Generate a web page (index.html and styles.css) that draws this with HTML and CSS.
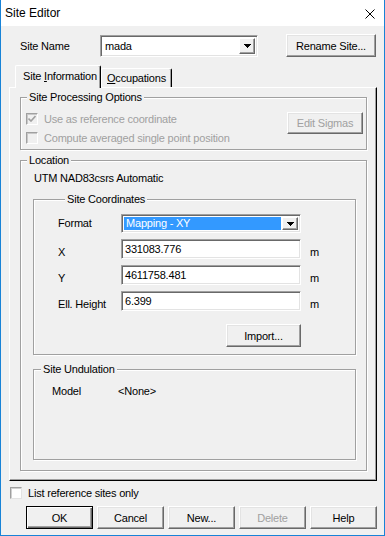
FILE: index.html
```html
<!DOCTYPE html>
<html lang="en">
<head>
  <meta charset="UTF-8">
  <title>Site Editor</title>
  <link rel="stylesheet" href="styles.css">
</head>
<body>
  <div class="window">
    <!-- Title bar -->
    <div class="titlebar">
      <span class="title">Site Editor</span>
      <svg class="close" width="10" height="10" viewBox="0 0 10 10">
        <path d="M0.5 0.5L9.5 9.5M9.5 0.5L0.5 9.5" stroke="#000" stroke-width="1" fill="none"/>
      </svg>
    </div>

    <div class="client">
      <div class="name-row">
        <span class="name-label">Site Name</span>
        <div class="combo name-combo">
          <span class="combo-text">mada</span>
          <span class="combo-btn">
            <svg width="7" height="4" viewBox="0 0 7 4"><path d="M0 0H7V1H6V2H5V3H4V4H3V3H2V2H1V1H0Z"/></svg>
          </span>
        </div>
        <button class="btn rename">Rename Site...</button>
      </div>

      <div class="tabs">
        <div class="tab tab-active"><span>Site <u>I</u>nformation</span></div>
        <div class="tab"><span><u>O</u>ccupations</span></div>
      </div>

      <div class="panel">
        <!-- Site Processing Options -->
        <div class="group processing">
          <div class="group-title">Site Processing Options</div>
          <div class="processing-body">
            <div class="checks">
              <div class="check disabled">
                <span class="box">
                  <svg width="8" height="7" viewBox="0 0 8 7"><path d="M0.5 3.5L3 6L7.5 1" stroke="#a0a0a0" stroke-width="1.6" fill="none"/></svg>
                </span>
                <span>Use as reference coordinate</span>
              </div>
              <div class="check disabled">
                <span class="box"></span>
                <span>Compute averaged single point position</span>
              </div>
            </div>
            <button class="btn sigmas" disabled>Edit Sigmas</button>
          </div>
        </div>

        <!-- Location -->
        <div class="group location">
          <div class="group-title">Location</div>
          <div class="datum">UTM NAD83csrs Automatic</div>

          <div class="group sub coords">
            <div class="group-title">Site Coordinates</div>
            <div class="coord-grid">
              <span class="coord-label format-label">Format</span>
              <div class="combo format-combo">
                <span class="combo-text selected">Mapping - XY</span>
                <span class="combo-btn">
                  <svg width="7" height="4" viewBox="0 0 7 4"><path d="M0 0H7V1H6V2H5V3H4V4H3V3H2V2H1V1H0Z"/></svg>
                </span>
              </div>
              <span></span>

              <span class="coord-label">X</span>
              <div class="field">331083.776</div>
              <span class="unit">m</span>

              <span class="coord-label">Y</span>
              <div class="field">4611758.481</div>
              <span class="unit">m</span>

              <span class="coord-label">Ell. Height</span>
              <div class="field">6.399</div>
              <span class="unit">m</span>
            </div>
            <div class="import-row">
              <button class="btn import">Import...</button>
            </div>
          </div>

          <div class="group sub undulation">
            <div class="group-title">Site Undulation</div>
            <div class="model-row">
              <span class="model-label">Model</span>
              <span>&lt;None&gt;</span>
            </div>
          </div>
        </div>
      </div>

      <div class="check list-check">
        <span class="box white"></span>
        <span>List reference sites only</span>
      </div>

      <div class="buttons">
        <button class="btn btn-default">OK</button>
        <button class="btn">Cancel</button>
        <button class="btn">New...</button>
        <button class="btn" disabled>Delete</button>
        <button class="btn">Help</button>
      </div>
    </div>
  </div>
</body>
</html>
```

FILE: styles.css
```css
/* General */
* {
  box-sizing: border-box;
}

body {
  margin: 0;
  font-family: "Liberation Sans", Arial, sans-serif;
  font-size: 11px;
  letter-spacing: -0.2px;
  color: #000;
  background: #fff;
}

.window {
  width: 385px;
  height: 536px;
  border: 1px solid #1883d7; /* accent frame */
  border-top: none;
  display: flex;
  flex-direction: column;
  background: #f0f0f0;
}

/* Title bar */
.titlebar {
  height: 26px;
  flex-shrink: 0;
  background: #fff;
  display: flex;
  align-items: center;
  justify-content: space-between;
  padding: 0 9px 0 4px;
  font-size: 12px;
  letter-spacing: 0;
}

.close {
  margin-top: 2px;
}

.client {
  flex: 1;
  display: flex;
  flex-direction: column;
  padding: 0 7px 0 8px;
}

/* Buttons - classic 3D look */
.btn {
  font-family: inherit;
  font-size: 11px;
  letter-spacing: -0.2px;
  color: #000;
  background: #f0f0f0;
  padding: 0;
  border: 1px solid;
  border-color: #fff #696969 #696969 #fff;
  box-shadow: inset -1px -1px 0 #a0a0a0, inset 1px 1px 0 #e3e3e3;
}

.btn:disabled {
  color: #a0a0a0;
}

.btn-default {
  border-color: #000;
  box-shadow: inset 1px 1px 0 #fff, inset -1px -1px 0 #696969, inset -2px -2px 0 #a0a0a0;
}

/* Site name row */
.name-row {
  margin-top: 8px;
  height: 23px;
  display: flex;
  align-items: center;
}

.name-label {
  margin-left: 11px;
  width: 80px;
}

.rename {
  margin-left: auto;
  margin-right: 1px;
  width: 90px;
  height: 23px;
}

/* Combo boxes and edit fields (sunken) */
.combo,
.field {
  background: #fff;
  border: 1px solid;
  border-color: #a0a0a0 #fff #fff #a0a0a0;
  box-shadow: inset 1px 1px 0 #696969, inset -1px -1px 0 #e3e3e3;
}

.combo {
  display: flex;
  align-items: center;
  padding: 2px;
}

.name-combo {
  width: 158px;
  height: 22px;
}

.combo-text {
  flex: 1;
  padding-left: 2px;
  line-height: 14px;
}

.combo-text.selected {
  background: #3399ff;
  color: #fff;
  margin-right: 1px;
}

.combo-btn {
  width: 16px;
  height: 100%;
  display: flex;
  align-items: center;
  justify-content: center;
  background: #f0f0f0;
  border: 1px solid;
  border-color: #fff #696969 #696969 #fff;
  box-shadow: inset -1px -1px 0 #a0a0a0;
}

.field {
  height: 20px;
  padding: 2px 3px;
  line-height: 14px;
}

/* Tabs */
.tabs {
  margin-top: 8px;
  display: flex;
  align-items: flex-end;
  padding-left: 6px;
}

.tab {
  height: 19px;
  padding: 0 5px;
  display: flex;
  align-items: center;
  border: 1px solid #fff;
  border-right-color: #000;
  border-bottom: none;
  border-radius: 2px 2px 0 0;
  box-shadow: inset -1px 0 0 #a0a0a0;
}

.tab-active {
  height: 23px;
  width: 86px;
  margin-bottom: -1px;
  padding: 0 0 3px 7px;
  position: relative;
  z-index: 1;
  background: #f0f0f0;
}

/* Tab page */
.panel {
  height: 394px;
  padding: 9px 9px 0 10px;
  border: 1px solid;
  border-color: #fff #000 #000 #fff;
  box-shadow: inset -1px -1px 0 #a0a0a0;
}

/* Group boxes (etched) */
.group {
  border: 1px solid #a0a0a0;
  box-shadow: 1px 1px 0 #fff, inset 1px 1px 0 #fff;
}

.group-title {
  width: fit-content;
  margin: -7px 0 0 6px;
  padding: 0 2px;
  line-height: 13px;
  background: #f0f0f0;
}

.group.sub > .group-title {
  margin-left: 7px;
}

.processing {
  height: 53px;
}

.processing-body {
  display: flex;
  align-items: flex-start;
  padding: 8px 3px 0 5px;
}

.checks {
  flex: 1;
  display: flex;
  flex-direction: column;
  gap: 6px;
}

.check {
  height: 13px;
  display: flex;
  align-items: center;
  gap: 6px;
}

.check.disabled {
  color: #a0a0a0;
}

.box {
  width: 12px;
  height: 12px;
  flex-shrink: 0;
  display: flex;
  align-items: center;
  justify-content: center;
  border: 1px solid;
  border-color: #a0a0a0 #fff #fff #a0a0a0;
  box-shadow: inset 1px 1px 0 #c8c8c8;
  background: #f0f0f0;
}

.box.white {
  background: #fff;
  border-color: #a0a0a0 #e3e3e3 #e3e3e3 #a0a0a0;
  box-shadow: inset 1px 1px 0 #d0d0d0;
}

.sigmas {
  width: 76px;
  height: 22px;
}

.location {
  margin-top: 10px;
  height: 311px;
  padding: 0 10px 0 12px;
}

.location > .group-title {
  margin-left: -6px;
}

.datum {
  margin: 5px 0 0 1px;
  line-height: 13px;
}

.coords {
  margin-top: 14px;
  height: 156px;
  padding-left: 24px;
}

.coord-grid {
  margin-top: 8px;
  display: grid;
  grid-template-columns: 54px 180px auto;
  grid-template-rows: 19px 20px 20px 20px;
  row-gap: 6px;
  column-gap: 9px;
}

.coord-grid .format-combo {
  grid-column: 2;
  padding: 2px;
}

.coord-label,
.unit {
  line-height: 13px;
  align-self: end;
  white-space: nowrap;
}

.format-label {
  align-self: center;
}

.coord-label {
  grid-column: 1;
}

.format-combo .combo-text {
  line-height: 13px;
}

.import-row {
  width: 243px;
  margin-top: 13px;
  display: flex;
  justify-content: flex-end;
}

.import {
  width: 75px;
  height: 23px;
}

.undulation {
  margin-top: 14px;
  height: 91px;
}

.model-row {
  margin: 9px 0 0 18px;
  display: flex;
  line-height: 13px;
}

.model-label {
  width: 66px;
}

/* Bottom area */
.list-check {
  margin: 5px 0 0 1px;
}

.buttons {
  margin-top: 7px;
  padding-left: 17px;
  display: flex;
  gap: 4px;
}

.buttons .btn {
  width: 67px;
  height: 23px;
}
```
